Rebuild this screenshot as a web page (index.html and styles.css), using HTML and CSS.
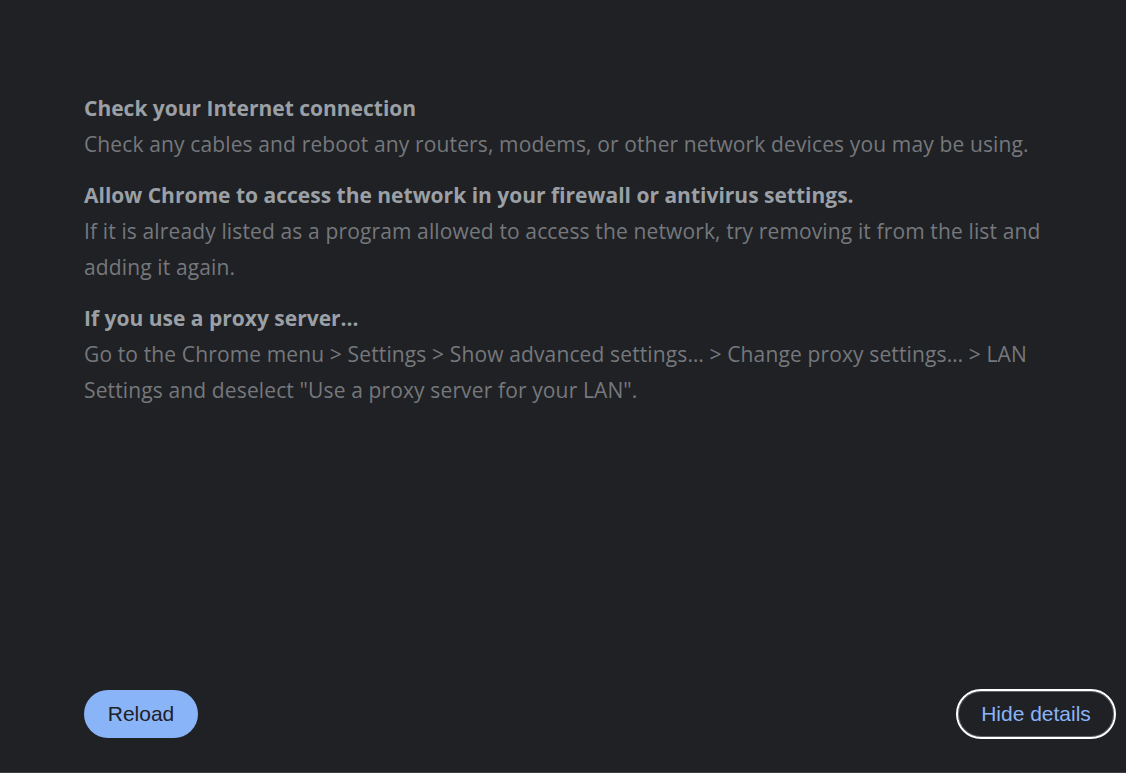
FILE: index.html
```html
<!DOCTYPE html>
<html>
<head>
<meta charset="utf-8">
<link rel="stylesheet" href="styles.css">
</head>
<body>
<div class="page">
  <div class="details">
    <div class="item">
      <div class="title">Check your Internet connection</div>
      <div class="text">Check any cables and reboot any routers, modems, or other network devices you may be using.</div>
    </div>
    <div class="item">
      <div class="title">Allow Chrome to access the network in your firewall or antivirus settings.</div>
      <div class="text">If it is already listed as a program allowed to access the network, try removing it from the list and adding it again.</div>
    </div>
    <div class="item">
      <div class="title">If you use a proxy server…</div>
      <div class="text">Go to the Chrome menu &gt; Settings &gt; Show advanced settings… &gt; Change proxy settings… &gt; LAN Settings and deselect "Use a proxy server for your LAN".</div>
    </div>
  </div>
  <div class="nav">
    <button class="btn reload">Reload</button>
    <button class="btn details-btn">Hide details</button>
  </div>
</div>
</body>
</html>
```
FILE: styles.css
```css
html, body {
  margin: 0;
  padding: 0;
  background: #202124;
  height: 100%;
}
.page {
  box-sizing: border-box;
  height: 773px;
  display: flex;
  flex-direction: column;
  justify-content: space-between;
  padding: 90px 12px 34px 84px;
  border-bottom: 1px solid #3c4043;
}
.details {
  width: 980px;
  font-family: "Open Sans", "Noto Sans", sans-serif;
  font-size: 21px;
  line-height: 36px;
}
.item + .item {
  margin-top: 15px;
}
.title {
  color: #9aa0a6;
  font-weight: 700;
}
.text {
  color: #75787d;
  letter-spacing: 0.13px;
}
.nav {
  display: flex;
  justify-content: space-between;
  align-items: center;
}
.btn {
  font-family: "Liberation Sans", Arial, sans-serif;
  font-size: 21px;
  border-radius: 24px;
  height: 48px;
  padding: 0;
  cursor: pointer;
}
.reload {
  background: #8ab4f8;
  color: #202124;
  border: none;
  width: 114px;
}
.details-btn {
  background: #202124;
  color: #8ab4f8;
  border: 1px solid #5f6368;
  width: 156px;
  height: 46px;
  outline: 2px solid #ffffff;
  outline-offset: 0;
}
```
